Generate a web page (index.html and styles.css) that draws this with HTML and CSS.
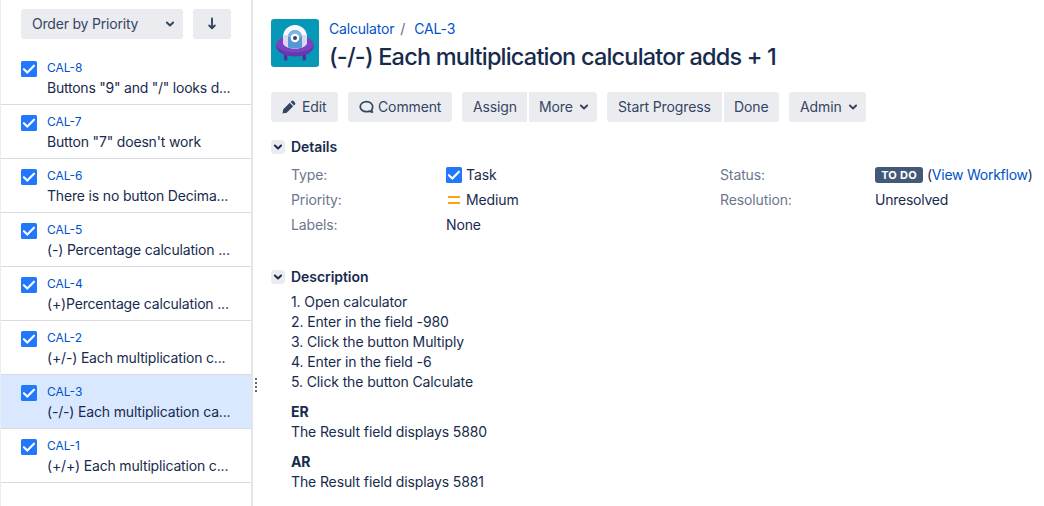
FILE: index.html
```html
<!DOCTYPE html>
<html lang="en">
<head>
<meta charset="utf-8">
<title>CAL-3 Calculator</title>
<link rel="stylesheet" href="styles.css">
</head>
<body>
<svg class="defs" width="0" height="0" aria-hidden="true">
  <symbol id="task" viewBox="0 0 16 16"><rect width="16" height="16" rx="1.6" fill="#2178fd"/><path d="M2.9 8.2 6.3 11.5 13 4.7" fill="none" stroke="#fff" stroke-width="2.1" stroke-linecap="round"/></symbol>
  <symbol id="chev" viewBox="0 0 10 8"><path d="M1.9 2.5 5 5.4 8.1 2.5" fill="none" stroke="currentColor" stroke-width="2" stroke-linecap="round" stroke-linejoin="round"/></symbol>
</svg>
<div class="app">
  <aside class="sidebar">
    <div class="order">
      <button class="btn order-by"><span>Order by Priority</span><svg class="chev"><use href="#chev"/></svg></button>
      <button class="btn order-dir"><svg width="12" height="14" viewBox="0 0 12 14"><path d="M6 1.500V11M3.200 8.500 6 11.300 8.800 8.500" fill="none" stroke="currentColor" stroke-width="1.900" stroke-linecap="round" stroke-linejoin="round"/></svg></button>
    </div>
    <ul class="issues">
      <li><svg class="task"><use href="#task"/></svg><div><a>CAL-8</a><p>Buttons "9" and "/" looks d...</p></div></li>
      <li><svg class="task"><use href="#task"/></svg><div><a>CAL-7</a><p>Button "7" doesn't work</p></div></li>
      <li><svg class="task"><use href="#task"/></svg><div><a>CAL-6</a><p>There is no button Decima...</p></div></li>
      <li><svg class="task"><use href="#task"/></svg><div><a>CAL-5</a><p>(-) Percentage calculation ...</p></div></li>
      <li><svg class="task"><use href="#task"/></svg><div><a>CAL-4</a><p>(+)Percentage calculation ...</p></div></li>
      <li><svg class="task"><use href="#task"/></svg><div><a>CAL-2</a><p>(+/-) Each multiplication c...</p></div></li>
      <li class="selected"><svg class="task"><use href="#task"/></svg><div><a>CAL-3</a><p>(-/-) Each multiplication ca...</p></div></li>
      <li><svg class="task"><use href="#task"/></svg><div><a>CAL-1</a><p>(+/+) Each multiplication c...</p></div></li>
    </ul>
    <div class="grip"><i></i><i></i><i></i><i></i></div>
  </aside>
  <main class="issue">
    <header class="head">
      <svg class="avatar" viewBox="0 0 48 48">
        <rect width="48" height="48" rx="3" fill="#0599b7"/>
        <path d="M13 35h3.400v5.400q0 1-1 1h-1.400q-1 0-1-1zM31.600 35H35v5.400q0 1-1 1h-1.400q-1 0-1-1z" fill="#50309a"/>
        <ellipse cx="24" cy="26.500" rx="19" ry="10.500" fill="#7a43bf"/>
        <path d="M5 26c3 5 10 7.500 19 7.500s16-2.500 19-7.500c0 7-8 11.500-19 11.500S5 33 5 26z" fill="#6439ae"/>
        <path d="M12 18a12 12 0 0 1 24 0v5c0 4-5 6.500-12 6.500S12 27 12 23z" fill="#fbfaff"/>
        <path d="M12 16h24v7c0 4-5 6.500-12 6.500S12 27 12 23z" fill="#ded5f0"/>
        <path d="M17 18a7 7 0 0 1 14 0v10.500q-7 2-14 0z" fill="#5499d4"/>
        <path d="M17 18a7 7 0 0 1 14 0z" fill="#78b7e5"/>
        <circle cx="24" cy="19" r="4.300" fill="#fff"/><circle cx="24" cy="19" r="2" fill="#35416c"/>
      </svg>
      <div>
        <nav class="crumbs"><a>Calculator</a><span>/</span><a>CAL-3</a></nav>
        <h1>(-/-) Each multiplication calculator adds + 1</h1>
      </div>
    </header>
    <div class="toolbar">
      <button class="btn edit"><svg width="14" height="14" viewBox="0 0 14 14"><path d="M.5 13.500 1.300 9.300 7.800 2.800l3.400 3.400-6.500 6.500zM8.600 2 9.600 1q1-.8 2 .1l1.300 1.300q.9 1 .1 2l-1 1z" fill="currentColor"/></svg><span>Edit</span></button>
      <button class="btn comment"><svg width="15" height="14" viewBox="0 0 15 14"><path d="M12.500 10.200C13.300 9.200 13.700 8 13.700 6.700 13.700 3.900 11 1.700 7.500 1.700S1.200 3.900 1.200 6.700s2.800 5 6.300 5c1.100 0 2-.2 2.900-.6l3 1-.9-1.900z" fill="none" stroke="currentColor" stroke-width="1.700" stroke-linejoin="round"/></svg><span>Comment</span></button>
      <div class="group"><button class="btn assign"><span>Assign</span></button><button class="btn more"><span>More</span><svg class="chev"><use href="#chev"/></svg></button></div>
      <div class="group"><button class="btn start"><span>Start Progress</span></button><button class="btn done"><span>Done</span></button></div>
      <button class="btn admin"><span>Admin</span><svg class="chev"><use href="#chev"/></svg></button>
    </div>
    <section class="details">
      <h2><i class="toggle"><svg class="chev"><use href="#chev"/></svg></i><span>Details</span></h2>
      <dl>
        <dt>Type:</dt><dd><svg class="task"><use href="#task"/></svg><span>Task</span></dd>
        <dt>Status:</dt><dd class="status"><b class="lozenge">TO DO</b><span>(<a>View Workflow</a>)</span></dd>
        <dt>Priority:</dt><dd><svg class="prio" viewBox="0 0 16 16"><path d="M2 4h12v2H2zM2 10h12v2H2z" fill="#ffa20d"/></svg><span>Medium</span></dd>
        <dt>Resolution:</dt><dd class="status">Unresolved</dd>
        <dt>Labels:</dt><dd>None</dd>
      </dl>
    </section>
    <section class="description">
      <h2><i class="toggle"><svg class="chev"><use href="#chev"/></svg></i><span>Description</span></h2>
      <div class="text">
        <p>1. Open calculator<br>2. Enter in the field -980<br>3. Click the button Multiply<br>4. Enter in the field -6<br>5. Click the button Calculate</p>
        <p><b>ER</b><br>The Result field displays 5880</p>
        <p><b>AR</b><br>The Result field displays 5881</p>
      </div>
    </section>
  </main>
</div>
</body>
</html>
```
FILE: styles.css
```css
* { box-sizing: border-box; }
body { margin: 0; background: #fff; color: #172b4d; font: 14px/20px Inter, "Liberation Sans", sans-serif; letter-spacing: -.12px; }
p, h1, h2, ul, dl, dd { margin: 0; padding: 0; }
a { color: #0052cc; }
svg { display: block; flex: none; }
.defs { position: absolute; }
.app { display: flex; width: 1044px; height: 506px; overflow: hidden; white-space: nowrap; }
.sidebar { position: relative; flex: none; width: 253px; border-left: 1px solid #ebecf0; border-right: 2px solid #e4e5ea; padding-top: 9px; }
.btn { display: flex; align-items: center; height: 30px; border: 0; border-radius: 3px; background: #ebecf0; color: #344563; font: inherit; letter-spacing: -.12px; padding: 0 0 0 11px; flex: none; }
.chev { width: 10px; height: 8px; }
.order { display: flex; gap: 10px; padding-left: 20px; }
.order-by { width: 162px; justify-content: space-between; padding-right: 8px; letter-spacing: -.2px; }
.order-dir { width: 38px; padding: 0; justify-content: center; }
.issues { list-style: none; margin-top: 12px; letter-spacing: -.17px; }
.issues li { display: flex; gap: 10px; height: 54px; padding: 7px 0 0 20px; border-bottom: 1px solid #d9dbe1; }
.issues a { display: block; font-size: 12px; letter-spacing: 0; }
.issues li:first-child p { letter-spacing: -.23px; }
.issues .selected { background: #d9e7ff; }
.task { width: 16px; height: 16px; }
.issues .task { margin-top: 3px; }
.grip { position: absolute; left: 254px; top: 378px; display: grid; gap: 2px; }
.grip i { width: 2px; height: 2px; background: #5e6c84; }
.issue { padding: 19px 0 0 18px; flex: 1; }
.head { display: flex; gap: 10px; height: 73px; }
.avatar { width: 48px; height: 48px; }
.crumbs { display: flex; height: 20px; letter-spacing: -.18px; }
.crumbs span { width: 20px; padding-left: 6px; color: #5e6c84; }
h1 { font-size: 23.5px; line-height: 28px; font-weight: 550; margin-top: 4px; letter-spacing: -.8px; }
.toolbar { display: flex; gap: 10px; }
.group { display: flex; gap: 2px; }
.group .btn:first-child { border-radius: 3px 0 0 3px; }
.group .btn:last-child { border-radius: 0 3px 3px 0; }
.edit { width: 67px; gap: 6px; }
.comment { width: 104px; gap: 4px; }
.assign { width: 65px; }
.more { width: 68px; padding-left: 10px; gap: 6px; }
.start { width: 115px; }
.done { width: 55px; padding-left: 10px; }
.admin { width: 77px; gap: 6px; }
h2 { display: flex; align-items: center; gap: 6px; font-size: 14px; line-height: 20px; font-weight: 600; letter-spacing: -.05px; }
.toggle { display: grid; place-items: center; width: 14px; height: 14px; border-radius: 3px; background: #ebecf0; }
.details { margin-top: 15px; }
dl { display: grid; grid-template-columns: 155px 274px 155px 1fr; grid-auto-rows: 25px; padding: 5px 0 0 20px; line-height: 25px; }
dt { color: #6b778c; }
dd { display: flex; align-items: center; gap: 4px; }
.status { letter-spacing: -.25px; }
.prio { width: 16px; height: 16px; }
.lozenge { width: 48px; height: 16px; border-radius: 3px; background: #425a78; color: #fff; font-size: 11px; line-height: 16px; text-align: center; font-weight: 750; letter-spacing: .25px; }
.description { margin-top: 30px; }
.text { padding: 5px 0 0 20px; }
.text p + p { margin-top: 10px; }
.text b { font-weight: 650; }
```
